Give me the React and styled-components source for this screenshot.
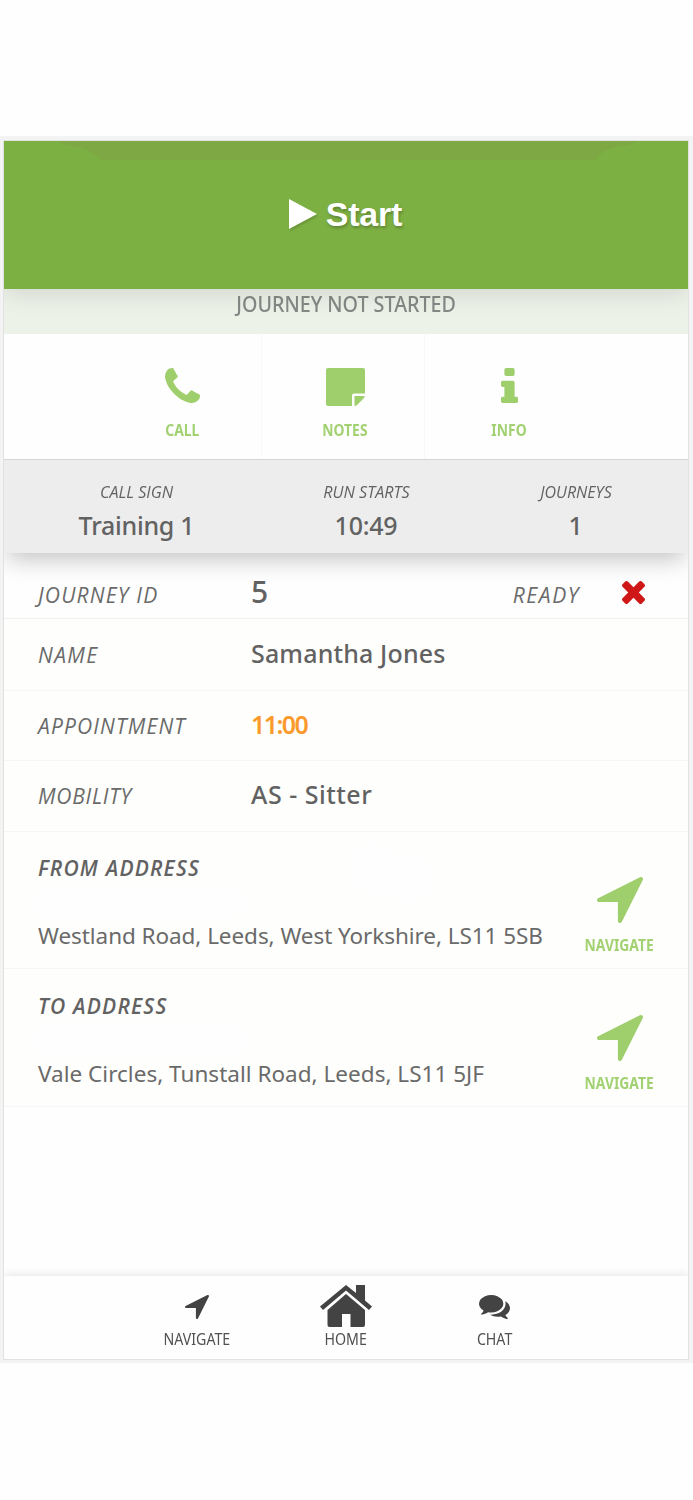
import React from "react";
import styled, { createGlobalStyle } from "styled-components";

const GlobalStyle = createGlobalStyle`
  * { box-sizing: border-box; }
  body {
    margin: 0;
    background: #fefefe;
    color: #626262;
    font-family: "Noto Sans", "Open Sans", sans-serif;
  }
`;

const Page = styled.main`
  width: 693px;
  height: 1500px;
  padding-top: 136px;
`;

const Frame = styled.div`
  height: 1227px;
  padding: 4px 4px 3px 3px;
  background: #f3f3f3;
`;

const Phone = styled.div`
  display: flex;
  flex-direction: column;
  height: 1220px;
  border: 1px solid #e2e2e2;
  background: #fefefe;
`;

const StartButton = styled.button`
  position: relative;
  z-index: 2;
  flex: none;
  display: flex;
  align-items: center;
  justify-content: center;
  gap: 9px;
  height: 148px;
  padding: 0 1px 3px 0;
  border: 0;
  background: #7db043;
  color: #fff;
  font: bold 34px/40px "Liberation Sans", Arial, sans-serif;
  letter-spacing: -0.2px;
  text-shadow: 1px 2px 3px rgba(0, 0, 0, 0.25);
  box-shadow: 0 6px 22px rgba(0, 0, 0, 0.1);
  clip-path: inset(0 0 -44px 0);
`;

const Notch = styled.svg`
  position: absolute;
  top: 0;
  left: 54px;
  width: 580px;
  height: 19px;
  fill: #7ea844;
`;

const PlayIcon = styled.svg`
  width: 28px;
  height: 30px;
  margin-top: 1px;
  fill: #fff;
  filter: drop-shadow(1px 2px 1px rgba(0, 0, 0, 0.15));
`;

const Status = styled.div`
  flex: none;
  height: 45px;
  background: #ecf2e8;
  color: #858885;
  font-size: 21px;
  font-weight: 500;
  line-height: 30px;
  text-align: center;
  span { display: inline-block; transform: scaleX(0.938); }
`;

const Actions = styled.div`
  flex: none;
  display: flex;
  justify-content: center;
  height: 126px;
  padding-right: 2px;
  border-bottom: 1px solid #d6d6d6;
`;

const Action = styled.div`
  width: ${(p) => (p.$last ? 166 : 163)}px;
  display: flex;
  flex-direction: column;
  align-items: center;
  padding: 34px 0 0 ${(p) => (p.$last ? 2 : 4)}px;
  border-right: ${(p) => (p.$last ? 0 : 1)}px solid #f8f8f8;
`;

const Icon = styled.svg`
  display: block;
  flex: none;
  width: ${(p) => p.$w}px;
  height: ${(p) => p.$h}px;
  fill: currentColor;
  color: ${(p) => (p.$dark ? "#434343" : "#9fcf6c")};
`;

const IconBox = styled.div`
  height: ${(p) => p.$h}px;
  display: flex;
  align-items: ${(p) => p.$align || "flex-start"};
`;

const GreenLabel = styled.span`
  color: #a2d171;
  font-size: 16.5px;
  font-weight: 700;
  line-height: 20px;
  white-space: nowrap;
  transform: scaleX(0.84);
`;

const Summary = styled.div`
  position: relative;
  z-index: 1;
  flex: none;
  display: grid;
  grid-template-columns: 265px 194px 225px;
  height: 93px;
  padding-top: 22px;
  background: #ededed;
  text-align: center;
  clip-path: inset(0 0 -40px 0);
  box-shadow: 0 10px 22px -4px rgba(0, 0, 0, 0.24);
`;

const SummaryCell = styled.div`
  display: flex;
  flex-direction: column;
  align-items: center;
`;

const SummaryLabel = styled.span`
  font: italic 400 17px/20px "Open Sans", "Noto Sans", sans-serif;
  transform: scaleX(${(p) => p.$fit || 0.95});
`;

const SummaryValue = styled.span`
  margin-top: 6px;
  font-size: 25px;
  font-weight: 500;
  line-height: 34px;
  letter-spacing: -0.25px;
`;

const Row = styled.div`
  flex: none;
  display: flex;
  align-items: baseline;
  height: ${(p) => p.$h}px;
  padding: ${(p) => p.$top}px 34px 0;
  border-bottom: 1px solid ${(p) => (p.$plain ? "#f0f2f2" : "#f6f6f5")};
  background: ${(p) => (p.$plain ? "#fefefe" : "#fefefc")};
`;

const Label = styled.span`
  width: ${(p) => p.$w || "213px"};
  color: #6a6a6a;
  font: italic 400 21px/34px "Open Sans", "Noto Sans", sans-serif;
  letter-spacing: ${(p) => p.$ls ?? 1.15}px;
`;

const Value = styled.span`
  font-size: ${(p) => p.$size || 25}px;
  font-weight: ${(p) => p.$weight || 500};
  line-height: 34px;
  letter-spacing: ${(p) => p.$ls || 0}px;
  color: ${(p) => p.$color || "#626262"};
`;

const Ready = styled.div`
  display: flex;
  align-items: baseline;
  gap: 42px;
  margin-left: auto;
  padding-right: 9px;
`;

const AddressRow = styled.div`
  position: relative;
  flex: none;
  display: flex;
  justify-content: space-between;
  height: ${(p) => p.$h}px;
  padding: ${(p) => p.$top}px 33px 0 34px;
  border-bottom: 1px solid #f6f6f5;
  background: #fefefc;
`;

const AddressTitle = styled.h2`
  margin: 0;
  color: #626262;
  font: italic 600 21px/34px "Open Sans", "Noto Sans", sans-serif;
  letter-spacing: 1.2px;
`;

const BlankLine = styled.div`
  width: 216px;
  height: 30px;
  margin: 2px 0 2px -7px;
  border-radius: 14px;
  background: #fefefe;
`;

const Blot = styled.svg`
  position: absolute;
  top: 9px;
  left: 344px;
  width: 90px;
  height: 64px;
  fill: #fefefe;
`;

const AddressText = styled.p`
  margin: 0;
  color: #6a6a6a;
  font-size: 22.5px;
  line-height: 34px;
  white-space: nowrap;
  letter-spacing: ${(p) => p.$ls || 0}px;
`;

const NavigateLink = styled.div`
  width: 71px;
  display: flex;
  flex-direction: column;
  align-items: center;
  padding-top: 26px;
`;

const Spacer = styled.div`
  flex: 1;
`;

const NavBar = styled.nav`
  position: relative;
  flex: none;
  display: flex;
  justify-content: center;
  height: 83px;
  padding-top: 9px;
  padding-right: 1px;
  background: #fefefe;
  box-shadow: 0 -1px 9px rgba(0, 0, 0, 0.11);
  clip-path: inset(-20px 0 0 0);
`;

const NavItem = styled.div`
  width: 149px;
  display: flex;
  flex-direction: column;
  align-items: center;
`;

const NavLabel = styled.span`
  margin-top: 1px;
  color: #505050;
  font-size: 16.5px;
  line-height: 20px;
  transform: scaleX(0.86);
`;

const PHONE =
  "M1600 1240q0 27-10 70.5t-21 68.5q-21 50-122 106-94 51-186 51-27 0-53-3.5t-57.5-12.5-47-14.5-55.5-20.5-49-18q-98-35-175-83-127-79-264-216t-216-264q-48-77-83-175-3-9-18-49t-20.5-55.5-14.5-47-12.5-57.5-3.5-53q0-92 51-186 56-101 106-122 25-11 68.5-21t70.5-10q14 0 21 3 18 6 53 76 11 19 30 54t35 63.5 31 53.5q3 4 17.5 25t21.5 35.5 7 28.5q0 20-28.5 50t-62 55-62 53-28.5 46q0 9 5 22.5t8.5 20.5 14 24 11.5 19q76 137 174 235t235 174q2 1 19 11.5t24 14 20.5 8.5 22.5 5q18 0 46-28.5t53-62 55-62 50-28.5q14 0 28.5 7t35.5 21.5 25 17.5q25 15 53.5 31t63.5 35 54 30q70 35 76 53 3 7 3 21z";
const INFO =
  "M1216 1344v128q0 26-19 45t-45 19h-512q-26 0-45-19t-19-45v-128q0-26 19-45t45-19h64v-384h-64q-26 0-45-19t-19-45v-128q0-26 19-45t45-19h384q26 0 45 19t19 45v576h64q26 0 45 19t19 45zm-128-1152v192q0 26-19 45t-45 19h-256q-26 0-45-19t-19-45v-192q0-26 19-45t45-19h256q26 0 45 19t19 45z";
const ARROW =
  "M1593 349l-640 1280q-17 35-57 35-5 0-15-2-22-5-35.5-22.5t-13.5-39.5v-576h-576q-22 0-39.5-13.5t-22.5-35.5 4-42 29-30l1280-640q13-7 29-7 27 0 45 19 15 14 18.5 34.5t-6.5 39.5z";
const CROSS =
  "M1490 1322q0 40-28 68l-136 136q-28 28-68 28t-68-28l-294-294-294 294q-28 28-68 28t-68-28l-136-136q-28-28-28-68t28-68l294-294-294-294q-28-28-28-68t28-68l136-136q28-28 68-28t68 28l294 294 294-294q28-28 68-28t68 28l136 136q28 28 28 68t-28 68l-294 294 294 294q28 28 28 68z";
const CHAT =
  "M1408 768q0 139-94 257t-256.5 186.5-353.5 68.5q-86 0-176-16-124 88-278 128-36 9-86 16h-3q-11 0-20.5-8t-11.5-21q-1-3-1-6.5t.5-6.5 2-6l2.5-5 3.5-5.5 4-5 4.5-5 4-4.5q5-6 23-25t26-29.5 22.5-29 25-38.5 20.5-44q-124-72-195-177t-71-224q0-139 94-257t256.5-186.5 353.5-68.5 353.5 68.5 256.5 186.5 94 257zm384 256q0 120-71 224.5t-195 176.5q10 24 20.5 44t25 38.5 22.5 29 26 29.5 23 25q1 1 4 4.5t4.5 5 4 5 3.5 5.5l2.5 5 2 6 .5 6.5-1 6.5q-3 14-13 22t-22 7q-50-7-86-16-154-40-278-128-90 16-176 16-271 0-472-132 58 4 88 4 161 0 309-45t264-129q125-92 192-212t67-254q0-77-23-152 129 71 204 178t75 230z";

const Cross = styled(Icon)`
  color: #cf1717;
  align-self: center;
  margin-bottom: 5px;
`;

const Arrow = ({ size, dark }) => (
  <Icon $w={size} $h={size} $dark={dark} viewBox="192 256 1408 1408">
    <path d={ARROW} />
  </Icon>
);

function Address({ title, text, height, top, spacing, children }) {
  return (
    <AddressRow $h={height} $top={top}>
      {children}
      <div>
        <AddressTitle>{title}</AddressTitle>
        <BlankLine />
        <AddressText $ls={spacing}>{text}</AddressText>
      </div>
      <NavigateLink>
        <IconBox $h={58}><Arrow size={46} /></IconBox>
        <GreenLabel>NAVIGATE</GreenLabel>
      </NavigateLink>
    </AddressRow>
  );
}

export default function App() {
  return (
    <Page>
      <GlobalStyle />
      <Frame>
        <Phone>
          <StartButton>
            <Notch viewBox="0 0 580 19">
              <path d="M0 0H580Q574 4 562 5Q546 7 537 19H43Q32 7 14 5Q5 4 0 0Z" />
            </Notch>
            <PlayIcon viewBox="0 0 28 30"><path d="M0 0L28 15L0 30Z" /></PlayIcon>
            Start
          </StartButton>
          <Status><span>JOURNEY NOT STARTED</span></Status>

          <Actions>
            <Action>
              <IconBox $h={52}>
                <Icon $w={35} $h={35} viewBox="192 128 1408 1408"><path d={PHONE} /></Icon>
              </IconBox>
              <GreenLabel>CALL</GreenLabel>
            </Action>
            <Action>
              <IconBox $h={52}>
                <Icon $w={39} $h={38} viewBox="0 0 39 38">
                  <path d="M2 0H37Q39 0 39 2V25.5H28Q26 25.5 26 27.5V38H2Q0 38 0 36V2Q0 0 2 0ZM28.5 28H39Q38.5 29.5 37 31L31.5 36.5Q30 38 28.5 38Z" />
                </Icon>
              </IconBox>
              <GreenLabel>NOTES</GreenLabel>
            </Action>
            <Action $last>
              <IconBox $h={52}>
                <Icon $w={17} $h={35} viewBox="576 128 640 1408" preserveAspectRatio="none"><path d={INFO} /></Icon>
              </IconBox>
              <GreenLabel>INFO</GreenLabel>
            </Action>
          </Actions>

          <Summary>
            <SummaryCell>
              <SummaryLabel>CALL SIGN</SummaryLabel>
              <SummaryValue>Training 1</SummaryValue>
            </SummaryCell>
            <SummaryCell>
              <SummaryLabel>RUN STARTS</SummaryLabel>
              <SummaryValue>10:49</SummaryValue>
            </SummaryCell>
            <SummaryCell>
              <SummaryLabel $fit={0.94}>JOURNEYS</SummaryLabel>
              <SummaryValue>1</SummaryValue>
            </SummaryCell>
          </Summary>

          <Row $h={66} $top={22} $plain>
            <Label $ls={1.2}>JOURNEY ID</Label>
            <Value $size={30}>5</Value>
            <Ready>
              <Label $w="auto" $ls={1.6}>READY</Label>
              <Cross $w={23} $h={23} viewBox="302 366 1188 1188"><path d={CROSS} /></Cross>
            </Ready>
          </Row>
          <Row $h={72} $top={17}>
            <Label $ls={1.4}>NAME</Label>
            <Value $ls={0.15}>Samantha Jones</Value>
          </Row>
          <Row $h={70} $top={16}>
            <Label>APPOINTMENT</Label>
            <Value $weight={600} $color="#fb9a2c" $ls={-1.6}>11:00</Value>
          </Row>
          <Row $h={71} $top={16}>
            <Label $ls={0.75}>MOBILITY</Label>
            <Value $ls={0.5}>AS - Sitter</Value>
          </Row>

          <Address title="FROM ADDRESS" text="Westland Road, Leeds, West Yorkshire, LS11 5SB" height={137} top={19} spacing={-0.06}>
            <Blot viewBox="0 0 90 64">
              <path d="M0 26C0 8 14 0 28 2C42 4 46 12 60 14C76 14 88 26 88 40C84 56 70 64 58 62C46 60 40 52 26 52C10 52 0 42 0 26Z" />
            </Blot>
          </Address>
          <Address title="TO ADDRESS" text="Vale Circles, Tunstall Road, Leeds, LS11 5JF" height={138} top={20} spacing={0.02} />

          <Spacer />

          <NavBar>
            <NavItem>
              <IconBox $h={43} $align="center"><Arrow size={24} dark /></IconBox>
              <NavLabel>NAVIGATE</NavLabel>
            </NavItem>
            <NavItem>
              <IconBox $h={43}>
                <Icon $dark $w={52} $h={42} viewBox="0 0 52 42">
                  <path d="M26 0L36 8V0H45V15.5L52 21.5L49 25L26 5.5L3 25L0 21.5Z" />
                  <path d="M26 9L45 25V40Q45 42 43 42H30.5V29H22V42H9.5Q7.5 42 7.5 40V25Z" />
                </Icon>
              </IconBox>
              <NavLabel>HOME</NavLabel>
            </NavItem>
            <NavItem>
              <IconBox $h={43} $align="center">
                <Icon $dark $w={31} $h={24} viewBox="0 256 1792 1408" preserveAspectRatio="none"><path d={CHAT} /></Icon>
              </IconBox>
              <NavLabel>CHAT</NavLabel>
            </NavItem>
          </NavBar>
        </Phone>
      </Frame>
    </Page>
  );
}
